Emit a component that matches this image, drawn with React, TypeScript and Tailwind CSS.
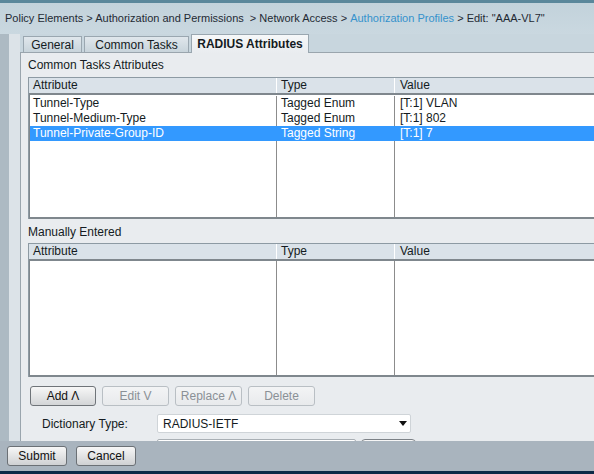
export default function App() {
  const rows1 = [
    ["Tunnel-Type", "Tagged Enum", "[T:1] VLAN"],
    ["Tunnel-Medium-Type", "Tagged Enum", "[T:1] 802"],
    ["Tunnel-Private-Group-ID", "Tagged String", "[T:1] 7"],
  ];
  const header = (
    <div className="grid grid-cols-[248px_118px_1fr] h-[15px] bg-[#dae2e9] border-b-2 border-[#7f878d] box-content">
      <div className="pl-[4px] leading-[15px] border-r border-white">Attribute</div>
      <div className="pl-[4px] leading-[15px] border-r border-white">Type</div>
      <div className="pl-[5px] leading-[15px]">Value</div>
    </div>
  );
  return (
    <div className="w-[594px] h-[474px] overflow-hidden flex flex-col font-['Liberation_Sans',Arial,sans-serif] text-[12px] text-[#141b22] bg-[#c8d6de]">
      <div className="h-[3px] shrink-0 bg-[#5a879b]" />
      <div className="h-[31px] shrink-0 flex items-center pl-[5px] text-[11px] text-[#1f2a34] whitespace-pre bg-gradient-to-b from-[#c2d2db] to-[#cad8e0]">
        <span>{"Policy Elements > Authorization and Permissions  > Network Access > "}</span>
        <span className="text-[#3592cc]">Authorization Profiles</span>
        <span>{' > Edit: "AAA-VL7"'}</span>
      </div>
      <div className="flex-1 min-h-0 flex">
        <div className="w-[9px] shrink-0 bg-[#adbac3]" />
        <div className="w-[11px] shrink-0 bg-[#dce3e8]" />
        <div className="flex-1 min-w-0 flex flex-col">
          <div className="h-[18px] shrink-0 flex items-end pl-[3px] text-[12px]">
            <div className="h-[16px] w-[59px] flex items-center justify-center border border-b-0 border-[#9aa7b0] bg-gradient-to-b from-[#e0e7ec] to-[#c8d4db]">General</div>
            <div className="ml-[2px] h-[16px] w-[105px] flex items-center justify-center border border-b-0 border-[#9aa7b0] bg-gradient-to-b from-[#e0e7ec] to-[#c8d4db]">Common Tasks</div>
            <div className="ml-[2px] h-[19px] w-[118px] -mb-px relative z-10 flex items-center justify-center border border-b-0 border-[#9aa7b0] bg-gradient-to-b from-[#f6f8f9] to-[#e9ecef] font-bold">RADIUS Attributes</div>
          </div>
          <div className="flex-1 min-h-0 overflow-hidden bg-[#e9ecef] border-l border-t border-[#9aa5ad] pl-[7px] flex flex-col">
            <div className="h-[24px] shrink-0 flex items-center">Common Tasks Attributes</div>
            <div className="w-[640px] shrink-0 border-t border-l border-[#8d9aa3]">
              {header}
              <div className="h-[121px] box-content flex flex-col border-l border-b-2 border-[#7f878d] bg-white pt-[1px]">
                {rows1.map((r, i) => {
                  const sel = i === 2;
                  return (
                    <div
                      key={i}
                      className={
                        "grid grid-cols-[247px_118px_1fr] h-[15px] leading-[15px] " +
                        (sel ? "bg-[#3399ff] text-white" : "")
                      }
                    >
                      <div className={"pl-[3px] border-r " + (sel ? "border-[#3399ff]" : "border-[#8c8c8c]")}>{r[0]}</div>
                      <div className={"pl-[4px] border-r " + (sel ? "border-[#3399ff]" : "border-[#8c8c8c]")}>{r[1]}</div>
                      <div className="pl-[5px]">{r[2]}</div>
                    </div>
                  );
                })}
                <div className="flex-1 grid grid-cols-[247px_118px_1fr]">
                  <div className="border-r border-[#8c8c8c]" />
                  <div className="border-r border-[#8c8c8c]" />
                  <div />
                </div>
              </div>
            </div>
            <div className="h-[24px] shrink-0 flex items-center pt-[2px]">Manually Entered</div>
            <div className="w-[640px] shrink-0 border-t border-l border-[#8d9aa3]">
              {header}
              <div className="h-[114px] box-content grid grid-cols-[247px_118px_1fr] border-l border-b-2 border-[#7f878d] bg-white">
                <div className="border-r border-[#8c8c8c]" />
                <div className="border-r border-[#8c8c8c]" />
                <div />
              </div>
            </div>
            <div className="mt-[9px] ml-[2px] shrink-0 flex gap-[6px]">
              <div className="h-[20px] w-[66px] flex items-center justify-center rounded-[3px] border border-[#6f7479] bg-gradient-to-b from-[#f7f7f7] to-[#d3d5d7] text-[#111]">Add Λ</div>
              <div className="h-[20px] w-[67px] flex items-center justify-center rounded-[3px] border border-[#b9bfc4] bg-gradient-to-b from-[#f3f4f5] to-[#e8eaec] text-[#8a9096]">Edit V</div>
              <div className="h-[20px] w-[67px] flex items-center justify-center rounded-[3px] border border-[#b9bfc4] bg-gradient-to-b from-[#f3f4f5] to-[#e8eaec] text-[#8a9096]">Replace Λ</div>
              <div className="h-[20px] w-[67px] flex items-center justify-center rounded-[3px] border border-[#b9bfc4] bg-gradient-to-b from-[#f3f4f5] to-[#e8eaec] text-[#8a9096]">Delete</div>
            </div>
            <div className="mt-[8px] shrink-0 flex items-center">
              <div className="w-[129px] pl-[14px]">Dictionary Type:</div>
              <div className="h-[19px] w-[254px] flex items-center justify-between rounded-[2px] border border-[#cfd4d8] bg-white pl-[5px] pr-[3px]">
                <span>RADIUS-IETF</span>
                <svg width="8" height="5" viewBox="0 0 8 5">
                  <polygon points="0,0 8,0 4,5" fill="#111" />
                </svg>
              </div>
            </div>
            <div className="mt-[6px] shrink-0 flex">
              <div className="ml-[129px] h-[20px] w-[199px] rounded-t-[2px] border border-[#a9afb4] bg-white" />
              <div className="ml-[5px] h-[20px] w-[55px] rounded-[4px] border border-[#7c8186] bg-gradient-to-b from-[#f7f7f7] to-[#d3d5d7]" />
            </div>
          </div>
        </div>
      </div>
      <div className="h-[30px] shrink-0 flex items-center pl-[7px] gap-[9px] bg-[#a9b4be]">
        <div className="h-[20px] w-[60px] flex items-center justify-center rounded-[3px] border border-[#6b7075] bg-gradient-to-b from-[#f7f7f7] to-[#cfd1d3] text-[#111]">Submit</div>
        <div className="h-[20px] w-[60px] flex items-center justify-center rounded-[3px] border border-[#6b7075] bg-gradient-to-b from-[#f7f7f7] to-[#cfd1d3] text-[#111]">Cancel</div>
      </div>
      <div className="h-[3px] shrink-0 bg-[#0c2a47]" />
    </div>
  );
}
